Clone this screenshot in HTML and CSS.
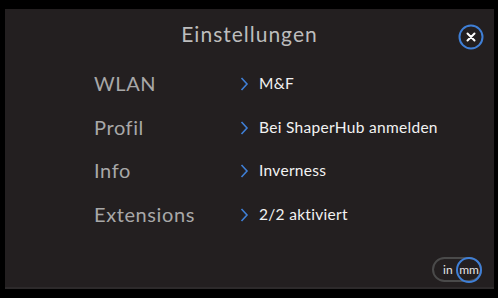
FILE: index.html
```html
<!DOCTYPE html>
<html lang="de">
<head>
<meta charset="utf-8">
<link rel="stylesheet" href="styles.css">
</head>
<body>
<div class="panel">
  <header class="head">
    <h1 class="title">Einstellungen</h1>
    <button class="close" aria-label="Schließen">
      <svg width="26" height="26" viewBox="0 0 26 26">
        <circle cx="13" cy="13" r="11.5" fill="none" stroke="#3f7fd6" stroke-width="2"/>
        <path d="M9.5 9.5 L16.5 16.5 M16.5 9.5 L9.5 16.5" stroke="#fff" stroke-width="2" stroke-linecap="round"/>
      </svg>
    </button>
  </header>
  <ul class="list">
    <li class="row"><span class="label">WLAN</span><span class="chev"><svg width="9" height="14" viewBox="0 0 9 14"><path d="M1.5 1 L7 7 L1.5 13" fill="none" stroke="#3f7fd6" stroke-width="1.6"/></svg></span><span class="value">M&amp;F</span></li>
    <li class="row"><span class="label">Profil</span><span class="chev"><svg width="9" height="14" viewBox="0 0 9 14"><path d="M1.5 1 L7 7 L1.5 13" fill="none" stroke="#3f7fd6" stroke-width="1.6"/></svg></span><span class="value">Bei ShaperHub anmelden</span></li>
    <li class="row"><span class="label">Info</span><span class="chev"><svg width="9" height="14" viewBox="0 0 9 14"><path d="M1.5 1 L7 7 L1.5 13" fill="none" stroke="#3f7fd6" stroke-width="1.6"/></svg></span><span class="value">Inverness</span></li>
    <li class="row"><span class="label">Extensions</span><span class="chev"><svg width="9" height="14" viewBox="0 0 9 14"><path d="M1.5 1 L7 7 L1.5 13" fill="none" stroke="#3f7fd6" stroke-width="1.6"/></svg></span><span class="value">2/2 aktiviert</span></li>
  </ul>
  <footer class="foot">
    <div class="units">
      <span class="unit">in</span>
      <span class="unit active">mm</span>
    </div>
  </footer>
</div>
</body>
</html>
```
FILE: styles.css
```css
html, body {
  margin: 0;
  padding: 0;
  background: #000;
  width: 498px;
  height: 298px;
  overflow: hidden;
  font-family: Lato, "Open Sans", sans-serif;
}
.panel {
  margin: 9px 4px 0 5px;
  height: 280px;
  background: #231f20;
  border-bottom: 2px solid #2d2a2b;
  box-sizing: border-box;
  display: flex;
  flex-direction: column;
  position: relative;
}
.head {
  height: 52px;
  display: flex;
  align-items: center;
  justify-content: center;
  position: relative;
}
.title {
  margin: -3px 0 0 0;
  font-size: 21px;
  font-weight: 400;
  color: #bdbdbd;
  letter-spacing: 1px;
}
.close {
  position: absolute;
  right: 10px;
  top: 15px;
  width: 26px;
  height: 26px;
  padding: 0;
  border: 0;
  background: none;
  display: block;
}
.close svg { display: block; }
.list {
  list-style: none;
  margin: 0;
  padding: 0 0 0 89px;
  display: flex;
  flex-direction: column;
}
.row {
  height: 43.5px;
  display: flex;
  align-items: center;
}
.label {
  width: 146px;
  font-size: 20px;
  color: #a8a8a8;
  letter-spacing: 0.6px;
  padding-top: 1px;
}
.chev {
  width: 19px;
  display: flex;
  align-items: center;
  padding-top: 3px;
}
.chev svg { display: block; }
.value {
  font-size: 15.5px;
  color: #f2f2f2;
  letter-spacing: 0.3px;
  padding-top: 1px;
}
.foot {
  margin-top: auto;
  display: flex;
  justify-content: flex-end;
  padding: 0 12px 5px 0;
}
.units {
  display: flex;
  align-items: center;
  height: 25px;
  width: 50px;
  box-sizing: border-box;
  border: 2px solid #4a4a4a;
  border-radius: 13px;
  padding-left: 9px;
}
.unit {
  font-size: 12px;
  color: #e6e6e6;
}
.unit.active {
  margin-left: auto;
  margin-right: -2px;
  width: 26px;
  height: 26px;
  box-sizing: border-box;
  border: 2.5px solid #3f7fd6;
  border-radius: 50%;
  display: flex;
  align-items: center;
  justify-content: center;
}
```
